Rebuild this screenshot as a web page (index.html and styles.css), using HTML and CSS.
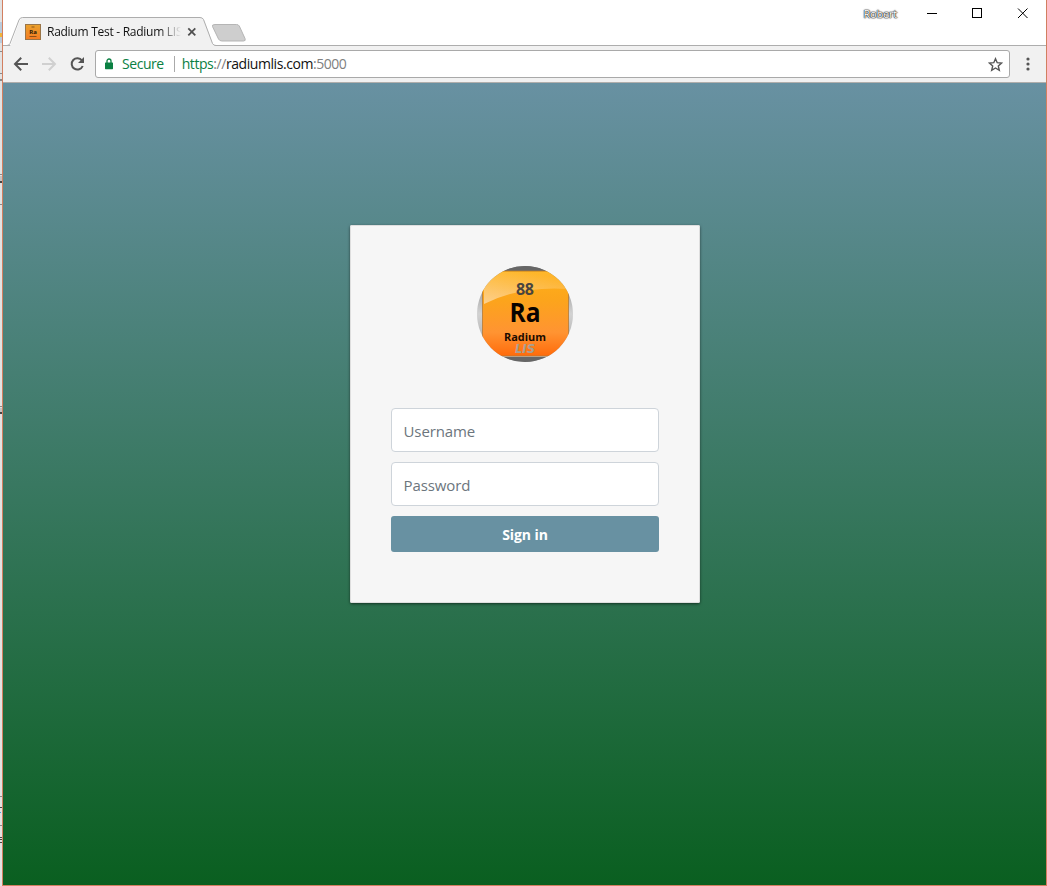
FILE: index.html
```html
<!DOCTYPE html>
<html lang="en">
<head>
<meta charset="utf-8">
<title>Radium Test - Radium LIS</title>
<link rel="stylesheet" href="styles.css">
</head>
<body>
<div class="desktop">
  <svg class="backdrop" width="2" height="886" viewBox="0 0 2 886" shape-rendering="crispEdges">
    <path fill="#e2e2e2" d="M0 0h2v886H0z"/>
    <path fill="#b9cbdc" d="M0 22h2v21H0z"/>
    <path fill="#f0b43a" d="M0 33h2v4H0z"/>
    <path fill="#8a8a8a" d="M0 51h2v1H0zM0 73h2v1H0zM0 79h2v2H0zM0 174h2v1H0zM0 204h2v1H0zM0 406h2v1H0zM0 796h2v1H0zM0 825h2v1H0z"/>
    <path fill="#c4c4c4" d="M0 176h2v5H0zM0 408h2v4H0z"/>
    <path fill="#444" d="M0 181h2v2H0zM0 412h2v2H0zM0 807h2v1H0zM0 837h2v1H0zM0 839h2v1H0zM0 842h2v1H0z"/>
    <path fill="#4b9be0" d="M0 812h1v1H0z"/>
  </svg>
  <div class="window">
    <header class="titlebar">
      <svg class="tab-shape" width="246" height="30" viewBox="0 0 246 30">
        <path d="M0 29.500H5C7 29.500 7.500 28 8 27L17 3Q18.200 .5 20.500 .5H197.500Q200 .5 201 2.500L210 27Q211 28.500 213 28.500H246V30H0Z" fill="#f1f1f1"/>
        <path d="M0 28.500H4Q6 28.500 7 26.500L16 3Q17 .5 19.500 .5H197Q199.500 .5 200.500 2.500L209.500 26.500Q210.500 28.500 213 28.500H246" fill="none" stroke="#adadad"/>
        <path d="M212 7.500H233.500Q235.500 7.500 236.300 9L242 21.500Q243 24 240.500 24H219Q216.500 24 215.500 22L209.500 9.500Q208.700 7.500 212 7.500Z" fill="#cecece" stroke="#b5b5b5"/>
      </svg>
      <div class="tab">
        <svg class="favicon" width="16" height="16" viewBox="0 0 16 16">
          <defs><linearGradient id="fav" x2="0" y2="1"><stop stop-color="#e9a22d"/><stop offset="1" stop-color="#f47b22"/></linearGradient></defs>
          <rect x=".5" y=".5" width="15" height="15" fill="url(#fav)" stroke="#9a7548"/>
          <text x="8" y="10" class="fav-symbol">Ra</text>
          <path d="M6.500 3h3M4.500 12.500h7" stroke="#6b3e14" opacity=".75"/>
        </svg>
        <span class="tab-title">Radium Test - Radium LIS</span>
        <svg width="10" height="10" viewBox="0 0 10 10"><path d="M1.300 1.300l7 7M8.300 1.300l-7 7" stroke="#505050" stroke-width="1.800"/></svg>
      </div>
      <span class="profile">Robert</span>
      <svg class="controls" width="104" height="12" viewBox="0 0 104 12" fill="none" stroke="#000">
        <path d="M0 5.500h10M45.500.5h9v9h-9z" shape-rendering="crispEdges"/>
        <path d="M91 .500l9.500 9.500M100.500 .500L91 10"/>
      </svg>
    </header>
    <nav class="toolbar">
      <svg width="84" height="18" viewBox="0 0 84 18" fill="none" stroke-width="2">
        <path d="M15 9H2M8.200 2.700L2 9l6.200 6.300" stroke="#555"/>
        <path d="M29 9h13M35.800 2.700L42 9l-6.200 6.300" stroke="#d0d0d0"/>
        <path d="M69 5.500A5.700 5.700 0 1 0 69.700 11" stroke="#555"/>
        <path d="M71 2v6h-6z" fill="#555"/>
      </svg>
      <div class="address">
        <svg width="8" height="12" viewBox="0 0 8 12"><path d="M2 5V3a2 2 0 0 1 4 0v2" fill="none" stroke="#0b8043" stroke-width="1.300"/><rect y="4.500" width="8" height="6.700" rx=".6" fill="#0b8043"/></svg>
        <span class="secure">Secure</span>
        <span class="rule"></span>
        <span class="url"><span class="scheme">https</span><span class="muted">://</span>radiumlis.com<span class="muted">:5000</span></span>
        <svg class="star" width="15" height="15" viewBox="0 0 15 15"><path d="M7.500 1.700L9.200 5.700L13.600 6.100L10.300 9L11.300 13.300L7.500 11L3.700 13.300L4.700 9L1.400 6.100L5.800 5.700Z" fill="none" stroke="#555" stroke-width="1.400"/></svg>
      </div>
      <svg width="4" height="14" viewBox="0 0 4 14" fill="#555"><circle cx="2" cy="2" r="1.600"/><circle cx="2" cy="7" r="1.600"/><circle cx="2" cy="12" r="1.600"/></svg>
    </nav>
    <main class="page">
      <form class="card">
        <svg class="logo" width="96" height="96" viewBox="0 0 96 96">
          <defs>
            <clipPath id="round"><circle cx="48" cy="48" r="48"/></clipPath>
            <linearGradient id="orange" x2="0" y2="1"><stop stop-color="#ffb118"/><stop offset=".35" stop-color="#fca41c"/><stop offset=".72" stop-color="#ff9432"/><stop offset="1" stop-color="#ff6b0b"/></linearGradient>
            <linearGradient id="gloss" x1="0" y1="1" x2=".5" y2="0"><stop stop-color="#fff" stop-opacity=".5"/><stop offset="1" stop-color="#fff" stop-opacity=".08"/></linearGradient>
            <linearGradient id="metal" x2="0" y2="1"><stop stop-color="#777"/><stop offset=".5" stop-color="#d2d2d2"/><stop offset="1" stop-color="#999"/></linearGradient>
          </defs>
          <g clip-path="url(#round)">
            <path fill="url(#metal)" d="M0 0h96v96H0z"/>
            <path fill="#666" d="M0 0h96v5H0zM0 91h96v5H0z"/>
            <path fill="#bbb" d="M0 90h96v1H0z"/>
            <rect x="5.500" y="5" width="86" height="85" rx="3" fill="url(#orange)" stroke="#b57a35" stroke-width=".8"/>
            <path d="M7 6H91V23Q42 20 7 38Z" fill="url(#gloss)"/>
            <text class="logo-number" x="48" y="28.500" textLength="18">88</text>
            <text class="logo-symbol" x="48" y="56" textLength="31" lengthAdjust="spacingAndGlyphs">Ra</text>
            <text class="logo-name" x="48" y="75" textLength="42" lengthAdjust="spacingAndGlyphs">Radium</text>
            <text class="logo-lis" x="48" y="86.500" textLength="20" lengthAdjust="spacingAndGlyphs">LIS</text>
          </g>
        </svg>
        <input class="field" type="text" placeholder="Username">
        <input class="field" type="password" placeholder="Password">
        <button class="submit" type="button">Sign in</button>
      </form>
    </main>
  </div>
</div>
</body>
</html>
```
FILE: styles.css
```css
* { box-sizing: border-box; }
body { margin: 0; overflow: hidden; font-family: "Open Sans", "Noto Sans", sans-serif; }
svg { display: block; flex: none; }
.desktop { display: flex; width: 1047px; height: 886px; }
.window { display: flex; flex-direction: column; width: 1045px; height: 886px; border: 1px solid #d27f60; border-top: 0; background: #fff; }
.titlebar { display: grid; grid-template-columns: 246px 1fr auto 104px; height: 46px; padding-right: 15px; background: linear-gradient(#adadad, #adadad) 0 45px / 100% 1px no-repeat #fff; }
.tab-shape { grid-area: 1 / 1; margin-top: 17px; }
.tab { grid-area: 1 / 1; z-index: 1; display: flex; align-items: center; width: 196px; height: 30px; margin-top: 17px; padding-left: 22px; }
.tab-title { width: 134px; margin: -2px 6px 0 6px; overflow: hidden; white-space: nowrap; font-size: 12px; letter-spacing: -.27px; color: #111; -webkit-mask-image: linear-gradient(90deg, #000 84%, transparent); mask-image: linear-gradient(90deg, #000 84%, transparent); }
.fav-symbol { font: bold 6px "Open Sans", sans-serif; text-anchor: middle; fill: #2a1604; }
.profile { grid-column: 3; margin: 6px 30px 0 0; font-size: 11px; line-height: 16px; letter-spacing: -.2px; color: #fff; text-shadow: 0 0 1px #222, 0 0 1px #222, 0 0 1px #444, 0 0 2px #555; }
.controls { grid-column: 4; margin-top: 8px; }
.toolbar { display: flex; align-items: center; height: 37px; padding: 0 16px 1px 10px; background: linear-gradient(#b0aeac, #b0aeac) 0 36px / 100% 1px no-repeat #f1f1f1; }
.address { display: flex; align-items: center; flex: 1; height: 28px; margin: 0 16px 0 -2px; padding: 0 6px 0 9px; border: 1px solid #a9a9a9; border-radius: 3px; background: #fff; font-size: 14px; color: #111; }
.secure { margin: -2px 0 0 9px; letter-spacing: -.45px; color: #0b8043; }
.rule { width: 1px; height: 16px; margin: 0 7px 0 10px; background: #aaa; }
.scheme { color: #0b8043; }
.url { margin-top: -2px; letter-spacing: -.44px; }
.muted { color: #808080; }
.star { margin-left: auto; }
.page { flex: 1; display: flex; justify-content: center; align-items: flex-start; padding-top: 142px; background: linear-gradient(#6891a2, #0a5f20); }
.card { display: flex; flex-direction: column; width: 350px; height: 378px; margin-left: 1px; padding: 41px 41px 0; border-radius: 2px; background: #f6f6f6; box-shadow: inset 0 0 0 1px #dedede, 0 1px 3px rgba(0, 0, 0, .55); }
.logo { align-self: center; margin-bottom: 46px; }
.logo text { text-anchor: middle; font-family: "Open Sans", sans-serif; font-weight: bold; }
.logo .logo-number { font-size: 16px; fill: #494440; }
.logo .logo-symbol { font-size: 26px; fill: #080300; }
.logo .logo-name { font-size: 11px; fill: #1b0b00; }
.logo .logo-lis { font-family: "DejaVu Sans", sans-serif; font-size: 11.500px; font-style: italic; fill: #aaa093; }
.field { width: 268px; height: 44px; margin: 0 0 10px; padding: 1px 12px 0 11.500px; border: 1px solid #ced4da; border-radius: 4px; background: #fff; font: 15px "Open Sans", sans-serif; letter-spacing: -.1px; }
.field::placeholder { color: #6c757d; opacity: 1; }
.submit { width: 268px; height: 36px; padding: 0; border: 0; border-radius: 3px; background: #6891a2; color: #fff; font: bold 14px "Open Sans", sans-serif; letter-spacing: -.1px; }
```
